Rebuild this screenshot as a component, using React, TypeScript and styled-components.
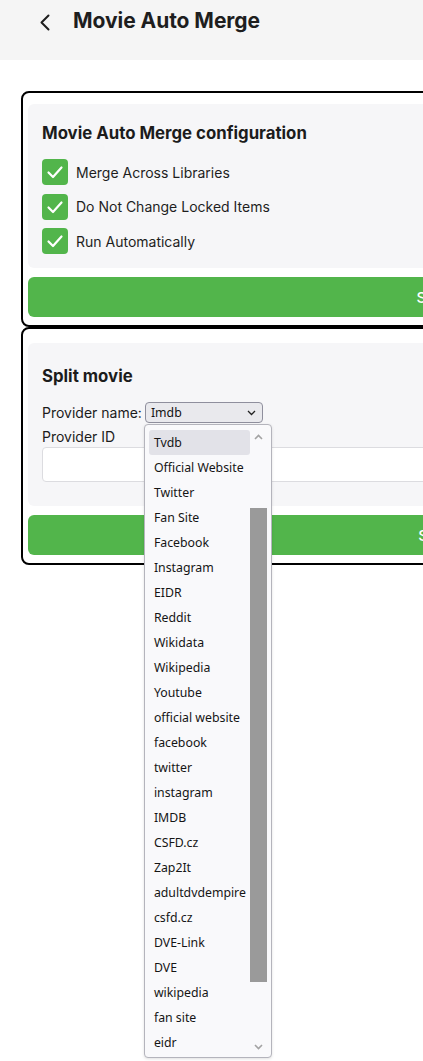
import React from "react";
import styled, { createGlobalStyle } from "styled-components";

const Global = createGlobalStyle`
  html, body { margin: 0; padding: 0; background: #ffffff; overflow: hidden; }
  body { font-family: Inter, "Noto Sans", "Liberation Sans", sans-serif; color: #1c1c1c; }
  * { box-sizing: border-box; }
`;

const Page = styled.div`
  width: 880px;
  min-height: 1061px;
`;

const Header = styled.header`
  height: 60px;
  background: #f5f5f5;
  display: flex;
  align-items: flex-start;
  padding: 8px 0 0 38px;
  gap: 21px;
`;

const BackButton = styled.button`
  border: 0;
  background: transparent;
  padding: 0;
  margin-top: 5px;
  width: 14px;
  height: 18px;
  display: flex;
  align-items: center;
  justify-content: center;
  cursor: pointer;
`;

const Title = styled.h1`
  margin: 0;
  font-size: 21px;
  line-height: 26px;
  font-weight: 700;
  color: #1e1e1e;
  letter-spacing: -0.05px;
`;

const Content = styled.main`
  padding: 31px 0 0 21px;
  display: flex;
  flex-direction: column;
`;

const Card = styled.section<{ $top: number }>`
  width: 826px;
  border: 2px solid #000;
  border-radius: 8px;
  padding: ${(p) => p.$top}px 5px 8px 5px;
  display: flex;
  flex-direction: column;
  gap: 9px;
`;

const Panel = styled.div<{ $top: number; $bottom: number }>`
  background: #f6f6f8;
  border-radius: 6px;
  padding: ${(p) => p.$top}px 14px ${(p) => p.$bottom}px 14px;
  display: flex;
  flex-direction: column;
`;

const PanelTitle = styled.h2`
  margin: 0;
  font-size: 16.8px;
  line-height: 22px;
  font-weight: 700;
  color: #1c1c1c;
`;

const CheckList = styled.div`
  margin-top: 15px;
  display: flex;
  flex-direction: column;
  gap: 8.5px;
`;

const CheckRow = styled.label`
  display: flex;
  align-items: center;
  gap: 8px;
  height: 26px;
  font-size: 14px;
  color: #1e1e1e;
`;

const CheckBox = styled.span`
  width: 26px;
  height: 26px;
  border-radius: 4px;
  background: #52b54b;
  display: flex;
  align-items: center;
  justify-content: center;
  flex: none;
`;

const GreenButton = styled.button`
  height: 40px;
  width: 100%;
  border: 0;
  border-radius: 6px;
  background: #52b54b;
  color: #ffffff;
  font-family: Inter, "Noto Sans", sans-serif;
  font-size: 15px;
  font-weight: 500;
  cursor: pointer;
`;

const FieldRow = styled.div`
  margin-top: 15px;
  display: flex;
  align-items: center;
  gap: 3px;
  height: 21px;
  font-size: 14px;
`;

const SelectWrap = styled.div`
  position: relative;
`;

const SelectBox = styled.div`
  width: 118px;
  height: 21px;
  border: 1px solid #8f8f9d;
  border-radius: 4px;
  background: #e9e9ed;
  display: flex;
  align-items: center;
  justify-content: space-between;
  padding: 0 6px 0 5px;
  font-family: "Noto Sans", "Liberation Sans", sans-serif;
  font-size: 12.3px;
  color: #111;
`;

const FieldLabel = styled.div`
  margin-top: 4px;
  font-size: 14px;
  line-height: 19px;
`;

const TextInput = styled.input`
  margin-top: 1px;
  height: 35px;
  width: 100%;
  border: 1px solid #dcdce0;
  border-radius: 4px;
  background: #ffffff;
  font-size: 14px;
  padding: 0 8px;
`;

const Dropdown = styled.div`
  position: absolute;
  top: calc(100% + 1px);
  left: -1px;
  width: 128px;
  height: 634px;
  border: 1px solid #b4b4bc;
  border-radius: 4px;
  background: #f9f9fb;
  box-shadow: 0 1px 3px rgba(0, 0, 0, 0.12);
  padding: 5px 4px 2px 4px;
  display: flex;
  z-index: 10;
`;

const OptionList = styled.ul`
  margin: 0;
  padding: 0;
  list-style: none;
  width: 101px;
  display: flex;
  flex-direction: column;
`;

const Option = styled.li<{ $active?: boolean }>`
  height: 25px;
  line-height: 25px;
  padding-left: 5px;
  border-radius: 3px;
  white-space: nowrap;
  font-family: "Noto Sans", "Liberation Sans", sans-serif;
  font-size: 12.3px;
  color: #151515;
  background: ${(p) => (p.$active ? "#e2e2e8" : "transparent")};
`;

const Track = styled.div`
  width: 17px;
  display: flex;
  flex-direction: column;
  align-items: center;
`;

const Thumb = styled.div`
  margin-top: 68px;
  width: 17px;
  height: 474px;
  background: #9a9a9a;
`;

const Spacer = styled.div`
  flex: 1;
`;

const Arrow = styled.svg<{ $mt: number; $mb: number }>`
  margin-top: ${(p) => p.$mt}px;
  margin-bottom: ${(p) => p.$mb}px;
  flex: none;
`;

const options = [
  "Tvdb",
  "Official Website",
  "Twitter",
  "Fan Site",
  "Facebook",
  "Instagram",
  "EIDR",
  "Reddit",
  "Wikidata",
  "Wikipedia",
  "Youtube",
  "official website",
  "facebook",
  "twitter",
  "instagram",
  "IMDB",
  "CSFD.cz",
  "Zap2It",
  "adultdvdempire",
  "csfd.cz",
  "DVE-Link",
  "DVE",
  "wikipedia",
  "fan site",
  "eidr",
];

const Check = () => (
  <svg width="18" height="18" viewBox="0 0 18 18" fill="none">
    <polyline
      points="2.5,9.5 7,14 15.5,4.5"
      stroke="#ffffff"
      strokeWidth="2.2"
      strokeLinecap="round"
      strokeLinejoin="round"
    />
  </svg>
);

const checks = [
  "Merge Across Libraries",
  "Do Not Change Locked Items",
  "Run Automatically",
];

export default function App() {
  return (
    <Page>
      <Global />
      <Header>
        <BackButton aria-label="Back">
          <svg width="12" height="17" viewBox="0 0 12 17" fill="none">
            <polyline
              points="9.5,1.5 2.5,8.5 9.5,15.5"
              stroke="#1e1e1e"
              strokeWidth="2"
              strokeLinecap="round"
              strokeLinejoin="round"
            />
          </svg>
        </BackButton>
        <Title>Movie Auto Merge</Title>
      </Header>
      <Content>
        <Card $top={11}>
          <Panel $top={18} $bottom={14}>
            <PanelTitle>Movie Auto Merge configuration</PanelTitle>
            <CheckList>
              {checks.map((c) => (
                <CheckRow key={c}>
                  <CheckBox>
                    <Check />
                  </CheckBox>
                  {c}
                </CheckRow>
              ))}
            </CheckList>
          </Panel>
          <GreenButton>Save</GreenButton>
        </Card>
        <Card $top={14}>
          <Panel $top={22} $bottom={24}>
            <PanelTitle>Split movie</PanelTitle>
            <FieldRow>
              Provider name:
              <SelectWrap>
                <SelectBox>
                  Imdb
                  <svg width="9" height="6" viewBox="0 0 9 6" fill="none">
                    <polyline
                      points="1,1 4.5,4.5 8,1"
                      stroke="#222"
                      strokeWidth="1.3"
                    />
                  </svg>
                </SelectBox>
                <Dropdown>
                  <OptionList>
                    {options.map((o, i) => (
                      <Option key={o} $active={i === 0}>
                        {o}
                      </Option>
                    ))}
                  </OptionList>
                  <Track>
                    <Arrow $mt={4} $mb={0} width="9" height="6" viewBox="0 0 9 6" fill="none">
                      <polyline points="1,5 4.5,1.5 8,5" stroke="#a3a3a3" strokeWidth="1.6" />
                    </Arrow>
                    <Thumb />
                    <Spacer />
                    <Arrow $mt={0} $mb={5} width="9" height="6" viewBox="0 0 9 6" fill="none">
                      <polyline points="1,1 4.5,4.5 8,1" stroke="#a3a3a3" strokeWidth="1.6" />
                    </Arrow>
                  </Track>
                </Dropdown>
              </SelectWrap>
            </FieldRow>
            <FieldLabel>Provider ID</FieldLabel>
            <TextInput />
          </Panel>
          <GreenButton>Split</GreenButton>
        </Card>
      </Content>
    </Page>
  );
}
